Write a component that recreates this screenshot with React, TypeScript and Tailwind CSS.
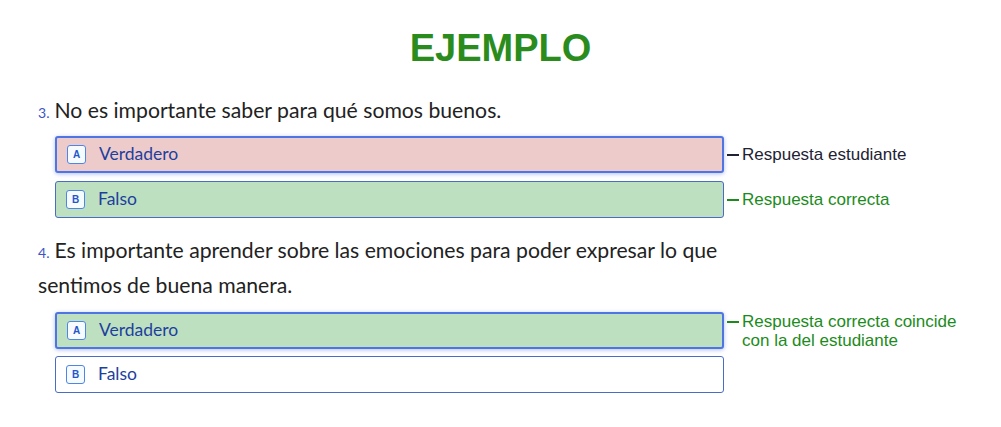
import type { ReactNode } from 'react';

type Tone = 'wrong' | 'right' | 'plain';

const toneClass: Record<Tone, string> = {
	wrong: 'bg-[#eecbcb]',
	right: 'bg-[#bde0c1]',
	plain: 'bg-white'
};

interface OptionProps {
	letter: string;
	label: string;
	tone: Tone;
	selected?: boolean;
}

function Option({ letter, label, tone, selected }: OptionProps) {
	return (
		<div
			className={`flex h-[37px] w-[669px] shrink-0 items-center gap-[13px] rounded-[3px] pl-[10px] ${toneClass[tone]} ${
				selected
					? 'border-2 border-[#4f74e3] shadow-[0_1px_4px_rgba(79,116,227,0.45)]'
					: 'border border-[#4a6cc4]'
			}`}
		>
			<span className="flex size-[19px] items-center justify-center rounded-[3px] border border-[#4f86e6] bg-[#f6fbff] font-['Liberation_Sans',sans-serif] text-[10px] font-bold text-[#2456c9]">
				{letter}
			</span>
			<span className="font-['Lato',sans-serif] text-[17.5px] text-[#1d3f9e]">
				{label}
			</span>
		</div>
	);
}

function Note({ children, green }: { children: ReactNode; green?: boolean }) {
	return (
		<div
			className={`flex gap-[3px] pl-[3px] font-['Liberation_Sans',Arial,sans-serif] text-[17px] leading-[19px] ${
				green ? 'text-[#1c8b1c]' : 'text-[#1e2233]'
			}`}
		>
			<span className="mt-[9px] h-[1.5px] w-[12px] shrink-0 bg-current" />
			<span>{children}</span>
		</div>
	);
}

function Question({ n, children }: { n: number; children: ReactNode }) {
	return (
		<p className="w-[700px] font-['Lato',sans-serif] text-[21.2px] leading-[35px] text-[#222]">
			<span className="mr-[5px] text-[14px] leading-none text-[#3b55c9]">{n}.</span>
			{children}
		</p>
	);
}

export default function App() {
	return (
		<div className="min-h-[427px] w-[1001px] bg-white pl-[38px]">
			<h1 className="pt-[31px] pr-[38px] text-center font-['Liberation_Sans',Arial,sans-serif] text-[38px] leading-[34px] font-bold text-[#2b8c1e]">
				EJEMPLO
			</h1>

			<div className="mt-[28px]">
				<Question n={3}>No es importante saber para qué somos buenos.</Question>
			</div>
			<div className="mt-[8px] ml-[17px] flex flex-col gap-[8px]">
				<div className="flex items-center">
					<Option letter="A" label="Verdadero" tone="wrong" selected />
					<Note>Respuesta estudiante</Note>
				</div>
				<div className="flex items-center">
					<Option letter="B" label="Falso" tone="right" />
					<Note green>Respuesta correcta</Note>
				</div>
			</div>

			<div className="mt-[15px]">
				<Question n={4}>
					Es importante aprender sobre las emociones para poder expresar lo que
					sentimos de buena manera.
				</Question>
			</div>
			<div className="mt-[9px] ml-[17px] flex flex-col gap-[6px]">
				<div className="flex items-start">
					<Option letter="A" label="Verdadero" tone="right" selected />
					<Note green>
						Respuesta correcta coincide
						<br />
						con la del estudiante
					</Note>
				</div>
				<div className="flex">
					<Option letter="B" label="Falso" tone="plain" />
				</div>
			</div>
		</div>
	);
}
